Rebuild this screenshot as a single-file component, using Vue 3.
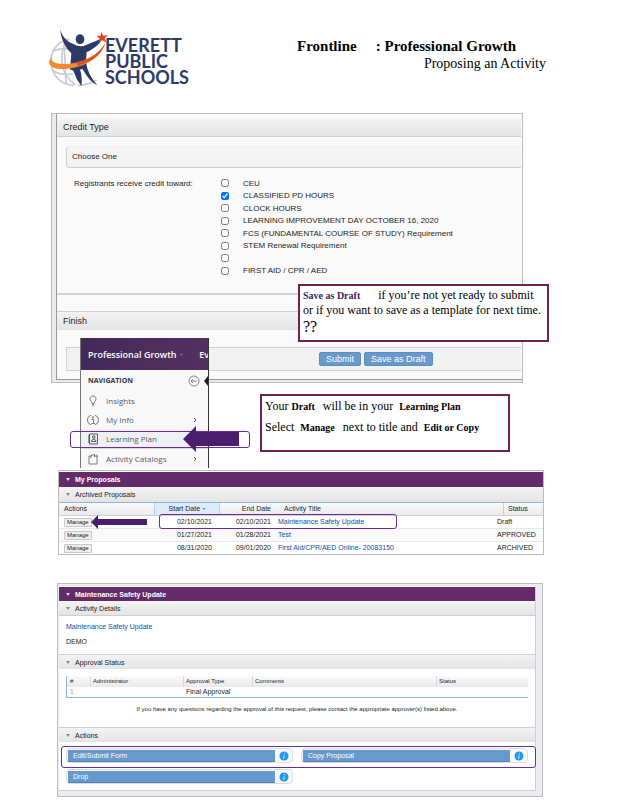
<script setup>
import { ref } from 'vue'

const credits = ref([
    { id: 'ceu', name: 'CEU', checked: false },
    { id: 'classified', name: 'CLASSIFIED PD HOURS', checked: true },
    { id: 'clock', name: 'CLOCK HOURS', checked: false },
    { id: 'learning', name: 'LEARNING IMPROVEMENT DAY OCTOBER 16, 2020', checked: false },
    { id: 'fcs', name: 'FCS (FUNDAMENTAL COURSE OF STUDY) Requirement', checked: false },
    { id: 'stem', name: 'STEM Renewal Requirement', checked: false },
    { id: 'blank', name: '', checked: false },
    { id: 'firstaid', name: 'FIRST AID / CPR / AED', checked: false }
])

const links = [
    { name: 'Insights', icon: 'bulb', more: false },
    { name: 'My Info', icon: 'info', more: true },
    { name: 'Learning Plan', icon: 'plan', more: false },
    { name: 'Activity Catalogs', icon: 'catalog', more: true }
]

const proposals = [
    { start: '02/10/2021', end: '02/10/2021', title: 'Maintenance Safety Update', status: 'Draft' },
    { start: '01/27/2021', end: '01/28/2021', title: 'Test', status: 'APPROVED' },
    { start: '08/31/2020', end: '09/01/2020', title: 'First Aid/CPR/AED Online- 20083150', status: 'ARCHIVED' }
]

const actions = ['Edit/Submit Form', 'Copy Proposal', 'Drop']
</script>
<template>
    <div class="page">
        <header class="top">
            <div class="logo">
                <svg viewBox="22 22 180 180" width="60" height="60" aria-hidden="true">
                    <g fill="none" stroke="#c9ccd3" stroke-width="5">
                        <path d="M86 55 C48 62 26 96 32 134 C38 170 66 194 100 194"/>
                        <path d="M84 58 C54 90 54 158 104 192"/>
                        <path d="M36 92 Q56 82 84 84"/>
                        <path d="M36 150 Q60 164 96 160"/>
                        <path d="M112 194 Q148 192 168 178"/>
                        <path d="M70 60 L76 190"/>
                    </g>
                    <path fill="#2d3a68" d="M58 26 C66 50 80 64 98 70 Q118 82 138 72 L182 54 L178 66 Q158 86 138 94 L136 124 Q140 160 170 194 Q148 186 126 146 L118 146 Q126 172 122 196 Q106 176 98 150 L88 146 L92 98 Q64 74 58 26 Z"/>
                    <ellipse cx="118" cy="56" rx="13" ry="15" fill="#2d3a68"/>
                    <path fill="#f58a2c" d="M34 108 C20 120 22 140 50 144 C106 150 180 122 194 66 C172 108 112 132 62 130 C38 128 30 120 34 108 Z"/>
                    <path fill="#d9531e" d="M112 136 C154 122 184 100 194 66 C180 94 148 118 106 126 Z"/>
                    <path fill="#d9481f" d="M182 34 L188 45 L202 43 L192 53 L198 66 L185 59 L174 67 L177 54 L168 45 L180 45 Z"/>
                </svg>
                <p>EVERETT<br>PUBLIC<br>SCHOOLS</p>
            </div>
            <div class="heading">
                <h1><span>Frontline</span><span>: Professional Growth</span></h1>
                <p>Proposing an Activity</p>
            </div>
        </header>

        <section class="credit">
            <div class="credit-body">
                <h2 class="bar">Credit Type</h2>
                <div class="choose">Choose One</div>
                <div class="credit-form">
                    <p id="toward">Registrants receive credit toward:</p>
                    <div class="checks" role="group" aria-labelledby="toward">
                        <div class="check" v-for="credit in credits" :key="credit.id">
                            <input type="checkbox" :id="credit.id" v-model="credit.checked">
                            <label :for="credit.id">{{ credit.name }}</label>
                        </div>
                    </div>
                </div>
                <h2 class="bar finish">Finish</h2>
                <div class="submit-row">
                    <button type="button">Submit</button>
                    <button type="button">Save as Draft</button>
                </div>
            </div>

            <div class="note note-save">
                <p class="wide"><b>Save as Draft</b><span>if you’re not yet ready to submit</span></p>
                <p>or if you want to save as a template for next time.</p>
                <p class="marks">??</p>
            </div>

            <nav class="menu">
                <div class="menu-top">
                    <b>Professional Growth</b>
                    <svg viewBox="0 0 8 8" width="7" height="7"><path d="M1 2.5 L4 5.5 L7 2.5" fill="none" stroke="#fff" stroke-width="1.5"/></svg>
                    <b class="eval">Ev</b>
                </div>
                <div class="menu-title">
                    <b>NAVIGATION</b>
                    <svg viewBox="0 0 12 12" width="12" height="12" fill="none" stroke="#666b73">
                        <circle cx="6" cy="6" r="5" stroke-width=".8"/>
                        <path d="M9 6 H3 M5 4 L3 6 L5 8" stroke-width=".8"/>
                    </svg>
                    <i></i>
                </div>
                <a href="#" v-for="link in links" :key="link.name" :class="{ active: link.icon === 'plan' }" @click.prevent>
                    <svg class="icon" viewBox="0 0 12 12" width="12" height="12" fill="none" stroke="#6b7078" stroke-width=".9">
                        <path v-if="link.icon === 'bulb'" d="M5 8.500 C5 6.500 3 6 3 3.800 C3 2 4.500 1 6 1 C7.500 1 9 2 9 3.800 C9 6 7 6.500 7 8.500 Z M5 9.800 H7 M5.500 11 H6.500"/>
                        <g v-if="link.icon === 'info'">
                            <path d="M4 1.200 A5 5 0 0 0 4 10.800 M8 1.200 A5 5 0 0 1 8 10.800"/>
                            <circle cx="6" cy="3.500" r=".8"/>
                            <path d="M4.500 5.500 H6.500 V9.500 M4.500 9.500 H8"/>
                        </g>
                        <g v-if="link.icon === 'plan'" stroke="#464a52">
                            <path d="M2.500 1 H10.500 V11 H2.500 Z"/>
                            <path d="M1 3 H3 M1 5 H3 M1 7 H3 M1 9 H3" stroke-width="1.2"/>
                            <circle cx="6.800" cy="4" r="1.300"/>
                            <path d="M4.500 8.500 Q4.500 6.500 6.800 6 Q9 6.500 9 8.500 Z"/>
                        </g>
                        <g v-if="link.icon === 'catalog'">
                            <path d="M2 3 H4.500 V2 H7.500 V3 H10 V11 H2 Z"/>
                            <path d="M4 3 V5 M7.500 1 V4 M10 1.500 V4"/>
                        </g>
                    </svg>
                    <span>{{ link.name }}</span>
                    <svg v-if="link.more" class="more" viewBox="0 0 6 6" width="6" height="6"><path d="M2 1 L4 3 L2 5" fill="none" stroke="#555b63"/></svg>
                </a>
            </nav>
            <div class="ring ring-plan"></div>
            <svg class="arrow arrow-plan" viewBox="0 0 56 26" width="56" height="26"><path d="M0 13 L13 0 V6 H56 V20 H13 V26 Z" fill="#4a1f6d"/></svg>

            <div class="note note-draft">
                <p><span>Your</span> <b>Draft</b><span class="gap">will be in your</span><b class="gap-small">Learning Plan</b></p>
                <p><span>Select</span><b class="gap-small">Manage</b><span class="gap">next to title and</span><b class="gap-small">Edit or Copy</b></p>
            </div>
        </section>

        <section class="proposals">
            <h2 class="purple">My Proposals</h2>
            <h3 class="bar toggle">Archived Proposals</h3>
            <table>
                <colgroup>
                    <col class="col-actions"><col class="col-start"><col class="col-end"><col><col class="col-status">
                </colgroup>
                <thead>
                    <tr>
                        <th>Actions</th>
                        <th class="date sorted">Start Date <i></i></th>
                        <th class="date">End Date</th>
                        <th class="activity">Activity Title</th>
                        <th><span class="status">Status</span></th>
                    </tr>
                </thead>
                <tbody>
                    <tr v-for="item in proposals" :key="item.title">
                        <td><button type="button">Manage</button></td>
                        <td class="date">{{ item.start }}</td>
                        <td class="date">{{ item.end }}</td>
                        <td><a href="#" @click.prevent>{{ item.title }}</a></td>
                        <td>{{ item.status }}</td>
                    </tr>
                </tbody>
            </table>
            <div class="ring ring-row"></div>
            <svg class="arrow arrow-row" viewBox="0 0 56 14" width="56" height="14"><path d="M0 7 L7 0 V4 H56 V10 H7 V14 Z" fill="#4a1f6d"/></svg>
        </section>

        <section class="detail">
            <div class="detail-body">
                <h2 class="purple">Maintenance Safety Update</h2>
                <h3 class="bar toggle">Activity Details</h3>
                <div class="about">
                    <a href="#" @click.prevent>Maintenance Safety Update</a>
                    <p>DEMO</p>
                </div>
                <h3 class="bar toggle line-top">Approval Status</h3>
                <div class="approval">
                    <table>
                        <colgroup>
                            <col class="col-num"><col class="col-admin"><col class="col-type"><col><col class="col-state">
                        </colgroup>
                        <thead>
                            <tr><th>#</th><th>Administrator</th><th>Approval Type</th><th>Comments</th><th>Status</th></tr>
                        </thead>
                        <tbody>
                            <tr><td class="num">1</td><td></td><td>Final Approval</td><td></td><td></td></tr>
                        </tbody>
                    </table>
                    <p>If you have any questions regarding the approval of this request, please contact the appropriate approver(s) listed above.</p>
                </div>
                <h3 class="bar toggle line-top">Actions</h3>
                <div class="actions">
                    <button type="button" v-for="action in actions" :key="action">
                        <span>{{ action }}</span>
                        <svg viewBox="0 0 10 10" width="10" height="10">
                            <circle cx="5" cy="5" r="4.500" fill="#1f9af0"/>
                            <path d="M5.500 2.200 V3.200 M5.200 4.300 L4.600 7.800" stroke="#d9f0ff" stroke-width="1"/>
                        </svg>
                    </button>
                    <div class="ring ring-actions"></div>
                </div>
            </div>
        </section>
    </div>
</template>
<style>
body{
    background: white;
}
</style>
<style scoped>
.page{
    font-family: "Liberation Sans", Arial, sans-serif;
    font-size: 7px;
    color: #1c1c24;
    padding: 28px 75px 2px 51px;
}

h1, h2, h3, p{
    margin: 0;
    font-weight: 400;
}

button{
    font-family: inherit;
    cursor: pointer;
}

.page a{
    text-decoration: none;
}

.top{
    display: flex;
    justify-content: space-between;
    height: 85px;
    margin: 0 -3px;
}

.logo{
    display: flex;
}

.logo p{
    font-family: Lato, sans-serif;
    font-size: 18px;
    font-weight: 700;
    line-height: 16px;
    color: #2d3a68;
    padding-top: 9px;
    margin-left: -3px;
}

.heading{
    font-family: "Liberation Serif", "Times New Roman", serif;
    color: black;
    padding-top: 9px;
}

.heading h1{
    display: flex;
    gap: 19px;
    font-size: 15px;
    font-weight: 700;
    line-height: 18px;
    padding-right: 30px;
}

.heading p{
    font-size: 14px;
    line-height: 17px;
    text-align: right;
}

.bar{
    background: linear-gradient(#f3f3f3, #e4e4e4);
    border-bottom: 1px solid #cfcfcf;
}

/* credit window */
.credit{
    position: relative;
    border: 1px solid #bcbcbc;
    background: #e9ebf1;
    padding: 0 0 2px 4px;
    margin: 0 20px 87px 0;
    font-size: 8px;
}

.credit-body{
    background: #fafafa;
    border-left: 1px solid #999;
    border-bottom: 1px solid #999;
    padding: 5px 1px 0 0;
}

.credit .bar{
    font-size: 9px;
    line-height: 17px;
    padding-left: 6px;
}

.choose{
    border: 1px solid #cfcfcf;
    border-top-color: #f0f0f0;
    border-right: 0;
    border-radius: 4px 0 0 4px;
    background: #f4f4f4;
    margin: 9px 0 0 9px;
    padding-left: 5px;
    line-height: 20px;
}

.credit-form{
    display: flex;
    padding: 9px 0 16px 17px;
    border-bottom: 2px solid #d2d2d2;
}

.credit-form p{
    width: 147px;
    line-height: 13px;
}

.checks{
    display: grid;
    grid-template-rows: repeat(8, 1fr);
    height: 100px;
}

.check{
    display: flex;
    align-items: center;
    gap: 14px;
}

.check input{
    width: 8px;
    height: 8px;
    margin: 0;
}

.credit .finish{
    border-top: 1px solid #cfcfcf;
    border-bottom: 0;
    line-height: 18px;
    margin-top: 16px;
}

.submit-row{
    display: flex;
    gap: 3px;
    margin: 17px 0 8px 9px;
    padding: 4px 0 4px 252px;
    background: #f2f2f2;
    border: 1px solid #d2d2d2;
    border-right: 0;
}

.submit-row button{
    height: 14px;
    padding: 0 6px;
    border: 1px solid #5b8dc0;
    border-radius: 2px;
    background: #6699cc;
    color: white;
    font-size: 9px;
    line-height: 12px;
}

/* callouts */
.note{
    position: absolute;
    box-sizing: border-box;
    border: 2px solid #6f2150;
    background: white;
    color: black;
    font-family: "Liberation Serif", "Times New Roman", serif;
    font-size: 12px;
    white-space: nowrap;
}

.note b{
    font-size: 10px;
}

.note-save{
    left: 246px;
    top: 170px;
    width: 251px;
    height: 58px;
    padding: 2px 3px;
    line-height: 15px;
}

.note-save b{
    color: #3b1e55;
}

.wide{
    display: flex;
    gap: 18px;
}

.marks{
    font-size: 16px;
    line-height: 18px;
}

.note-draft{
    left: 208px;
    top: 280px;
    width: 250px;
    height: 58px;
    padding: 0 3px;
    line-height: 21px;
}

.gap{
    margin-left: 8px;
}

.gap-small{
    margin-left: 6px;
}

/* navigation menu */
.menu{
    position: absolute;
    left: 28px;
    top: 224px;
    width: 129px;
    box-sizing: border-box;
    border-left: 1px solid #777;
    border-right: 1px solid #33343a;
    background: #f8f8f9;
    font-family: "Open Sans", "Noto Sans", sans-serif;
    color: #555b63;
    overflow: hidden;
}

.menu-top{
    display: flex;
    align-items: center;
    gap: 4px;
    height: 32px;
    padding-left: 7px;
    margin-right: -1px;
    background: linear-gradient(90deg, #432a5b, #55305f);
    color: white;
    font-size: 9px;
    white-space: nowrap;
}

.menu-top b{
    font-weight: 600;
}

.menu-top .eval{
    margin-left: 12px;
}

.menu-title{
    display: flex;
    align-items: center;
    justify-content: space-between;
    height: 21px;
    padding-left: 7px;
    color: #33373f;
    font-size: 7px;
}

.menu-title svg{
    margin-left: auto;
    margin-right: 4px;
}

.menu-title i{
    border: 5px solid transparent;
    border-left: 0;
    border-right: 4px solid #1c2026;
}

.menu a{
    display: flex;
    align-items: center;
    gap: 7px;
    height: 19px;
    padding: 0 10px 0 6px;
    color: #555b63;
    font-size: 8px;
}

.menu a.active{
    background: #eff0f3;
    border-bottom: 1px solid #d3dae6;
}

.more{
    margin-left: auto;
}

/* purple marks over the screens */
.ring{
    position: absolute;
    box-sizing: border-box;
    border: 1px solid #6b2c99;
    border-radius: 3px;
    pointer-events: none;
}

.arrow{
    position: absolute;
}

.ring-plan{
    left: 18px;
    top: 317px;
    width: 180px;
    height: 17px;
}

.arrow-plan{
    left: 131px;
    top: 312px;
}

.ring-row{
    left: 100px;
    top: 43px;
    width: 238px;
    height: 15px;
}

.arrow-row{
    left: 32px;
    top: 44px;
}

.ring-actions{
    left: 2px;
    right: -1px;
    top: 4px;
    height: 22px;
}

/* proposals */
.purple{
    display: flex;
    align-items: center;
    gap: 5px;
    height: 15px;
    padding-left: 7px;
    background: #642b6b;
    color: white;
    font-size: 7px;
    font-weight: 700;
}

.purple::before, .toggle::before{
    content: "";
    border: 2px solid transparent;
    border-top: 3px solid #ddd;
    border-bottom: 0;
}

.toggle{
    display: flex;
    align-items: center;
    gap: 5px;
    height: 14px;
    padding-left: 7px;
    font-size: 7px;
}

.toggle::before{
    border-top-color: #888;
}

.proposals{
    position: relative;
    border: 1px solid #bcbcbc;
    margin: 0 -1px 28px 7px;
    padding-top: 1px;
}

.proposals .toggle{
    height: 15px;
    border-bottom: 0;
}

table{
    width: 100%;
    table-layout: fixed;
    border-collapse: separate;
    border-spacing: 0;
}

th, td{
    padding: 0 0 0 5px;
    text-align: left;
    font-weight: 400;
    line-height: 12px;
    white-space: nowrap;
}

th{
    background: linear-gradient(#fafafa, #e9eaec);
}

.proposals table{
    border-top: 1px solid #8fb4e4;
}

.proposals th{
    border-bottom: 1px solid #cfcfcf;
}

.proposals td{
    height: 12px;
    padding-left: 3px;
    border-bottom: 1px solid #e8e8e8;
}

.proposals tbody tr:last-child td{
    border-bottom: 0;
}

.proposals tr:nth-child(2) td{
    background: #fafafa;
}

.col-actions{
    width: 95px;
}

.col-start{
    width: 66px;
}

.col-end{
    width: 55px;
}

.col-status{
    width: 49px;
}

.proposals .date{
    text-align: right;
    padding-right: 4px;
}

.proposals td.date:nth-child(2){
    padding-right: 8px;
}

.proposals .sorted{
    background: #dfeafa;
    border-left: 1px solid #b9cfec;
    border-right: 1px solid #b9cfec;
    padding-right: 13px;
}

.sorted i{
    display: inline-block;
    border: 2px solid transparent;
    border-top: 2px solid #6b9ad6;
    border-bottom: 0;
    vertical-align: middle;
}

.activity{
    padding-left: 9px;
}

.status{
    display: block;
    margin-left: 4px;
    padding-left: 4px;
    border-left: 1px solid #cfcfcf;
}

td a, .about a{
    color: #0a50a0;
}

td button{
    display: block;
    height: 9px;
    margin-left: 2px;
    padding: 0 2px;
    border: 1px solid #c8c8c8;
    border-radius: 1px;
    background: #eee;
    color: #1c1c24;
    font-size: 6px;
    line-height: 7px;
}

/* activity detail */
.detail{
    border: 1px solid #bcbcbc;
    background: #ecedf2;
    margin: 0 0 0 6px;
    padding: 2px 6px 5px 1px;
}

.detail-body{
    background: white;
    border-right: 1px solid #cfcfcf;
    border-bottom: 1px solid #cfcfcf;
    padding-top: 1px;
}

.detail .purple{
    height: 14px;
}

.line-top{
    border-top: 1px solid #cfcfcf;
    border-bottom: 0;
}

.about{
    height: 38px;
    padding-left: 7px;
    line-height: 15px;
    padding-top: 3px;
    box-sizing: border-box;
}

.approval{
    height: 58px;
    padding: 7px 7px 0;
    box-sizing: border-box;
}

.approval table{
    border-left: 1px solid #8fb4e4;
    border-bottom: 1px solid #8fb4e4;
}

.approval th, .approval td{
    padding-left: 2px;
    line-height: 11px;
    border-left: 1px solid #d8d8d8;
}

.approval td, .approval th:first-child{
    border-left-color: transparent;
}

.approval th{
    font-size: 6px;
}

.approval td{
    line-height: 10px;
}

.approval .num{
    color: #e0912c;
}

.col-num{
    width: 23px;
}

.col-admin{
    width: 93px;
}

.col-type{
    width: 69px;
}

.col-state{
    width: 92px;
}

.approval p{
    padding-top: 5px;
    font-size: 6px;
    line-height: 12px;
    text-align: center;
}

.actions{
    position: relative;
    display: grid;
    grid-template-columns: 1fr 1fr;
    gap: 6px 8px;
    padding: 6px 7px 6px;
}

.actions button{
    display: flex;
    align-items: center;
    height: 15px;
    padding: 0 3px 0 1px;
    border: 1px solid #ddd;
    border-radius: 4px;
    background: #f8f8f8;
    color: white;
    font-size: 7px;
    text-align: left;
}

.actions span{
    flex: 1;
    margin-right: 4px;
    padding-left: 5px;
    background: #6699cc;
    border-bottom: 1px solid #4d83bb;
    line-height: 11px;
}
</style>
